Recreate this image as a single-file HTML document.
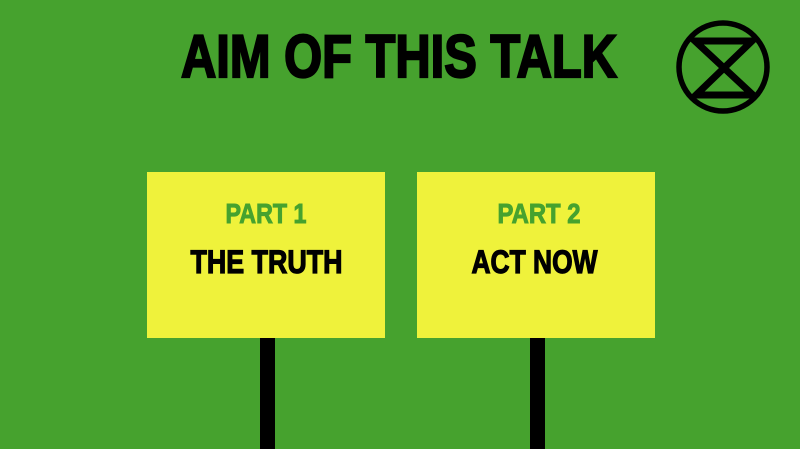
<!DOCTYPE html>
<html><head><meta charset="utf-8"><style>
html,body{margin:0;padding:0;background:#46a22e;}
svg{display:block}
text{font-family:"Liberation Sans",Arial,sans-serif;font-weight:bold}
</style></head><body>
<svg width="800" height="449" viewBox="0 0 800 449" xmlns="http://www.w3.org/2000/svg">
<defs><clipPath id="c"><circle cx="723" cy="67" r="44"/></clipPath></defs>
<rect width="800" height="449" fill="#46a22e"/>
<text x="181" y="77" font-size="60" fill="#000" stroke="#000" stroke-width="2.2" textLength="436" lengthAdjust="spacingAndGlyphs">AIM OF THIS TALK</text>
<path clip-path="url(#c)" d="M695 41 L752 41 L696 95 L753 95 Z" fill="none" stroke="#000" stroke-width="7" stroke-linejoin="miter" stroke-miterlimit="10"/>
<circle cx="723" cy="67" r="44" fill="none" stroke="#000" stroke-width="5.5"/>
<rect x="260" y="338" width="15" height="111" fill="#000"/>
<rect x="530" y="338" width="15" height="111" fill="#000"/>
<rect x="147" y="172" width="238" height="166" fill="#eff23b"/>
<rect x="417" y="172" width="238" height="166" fill="#eff23b"/>
<text x="225.5" y="223" font-size="28" fill="#46a22e" stroke="#46a22e" stroke-width="1" textLength="81" lengthAdjust="spacingAndGlyphs">PART 1</text>
<text x="190.5" y="273" font-size="32" fill="#000" stroke="#000" stroke-width="1.2" textLength="152" lengthAdjust="spacingAndGlyphs">THE TRUTH</text>
<text x="497.5" y="223" font-size="28" fill="#46a22e" stroke="#46a22e" stroke-width="1" textLength="83" lengthAdjust="spacingAndGlyphs">PART 2</text>
<text x="471.5" y="273" font-size="32" fill="#000" stroke="#000" stroke-width="1.2" textLength="126" lengthAdjust="spacingAndGlyphs">ACT NOW</text>
</svg>
</body></html>
